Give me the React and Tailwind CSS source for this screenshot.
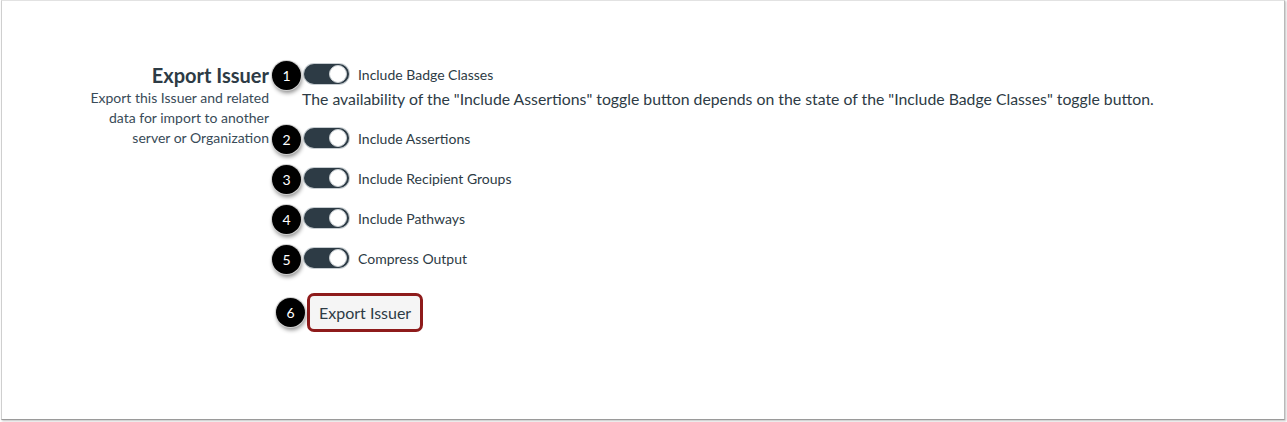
import React from 'react';

const Badge = ({ n, className = '' }) => (
  <span
    className={`absolute flex items-center justify-center w-[29px] h-[29px] rounded-full bg-black text-white text-[14px] ring-1 ring-[#d0d0d0] shadow-[1px_3px_4px_rgba(0,0,0,0.45)] z-10 ${className}`}
  >
    {n}
  </span>
);

const Toggle = ({ n, label }) => (
  <div className="relative flex items-center h-[20px] pl-[2px]">
    <Badge n={n} className="-left-[30px] top-[-3px]" />
    <span className="relative w-[45px] h-[20px] rounded-full bg-[#2d3b45] ring-1 ring-[#c7cdd1]">
      <span className="absolute right-[2px] top-[1px] w-[18px] h-[18px] rounded-full bg-white border border-[#c7cdd1]" />
    </span>
    <span className="ml-[9px] text-[14px] text-[#2d3b45]">{label}</span>
  </div>
);

export default function App() {
  return (
    <div className="w-[1287px] h-[422px] bg-white font-['Lato','Noto_Sans',sans-serif]">
      <div className="ml-px w-[1284px] h-[420px] border border-t-[#e2e2e2] border-l-[#cfcfcf] border-r-[#b9b9b9] border-b-[#9a9a9a] shadow-[1px_1px_2px_rgba(0,0,0,0.25)] bg-white">
        <div className="flex items-start pt-[63px]">
          {/* Left description column */}
          <div className="w-[267px] text-right text-[#2d3b45]">
            <h2 className="text-[20px] leading-[22px] font-bold">Export Issuer</h2>
            <p className="mt-[2px] text-[14px] leading-[20px] text-[#394b58]">
              Export this Issuer and related
              <br />
              data for import to another
              <br />
              server or Organization
            </p>
          </div>

          {/* Options column */}
          <div className="ml-[33px] flex flex-col">
            <Toggle n={1} label="Include Badge Classes" />
            <p className="mt-[4px] text-[15.8px] leading-[22px] text-[#2d3b45]">
              The availability of the "Include Assertions" toggle button depends on the state of the "Include Badge Classes" toggle button.
            </p>
            <div className="mt-[18px] flex flex-col gap-[20px]">
              <Toggle n={2} label="Include Assertions" />
              <Toggle n={3} label="Include Recipient Groups" />
              <Toggle n={4} label="Include Pathways" />
              <Toggle n={5} label="Compress Output" />
            </div>
            <div className="relative mt-[25px] ml-[5px] self-start">
              <Badge n={6} className="-left-[31px] top-[5px]" />
              <button className="h-[39px] px-[9px] rounded-[7px] border-[3px] border-[#8e1b1b] bg-[#f5f5f5] text-[16px] text-[#2d3b45]">
                Export Issuer
              </button>
            </div>
          </div>
        </div>
      </div>
    </div>
  );
}
